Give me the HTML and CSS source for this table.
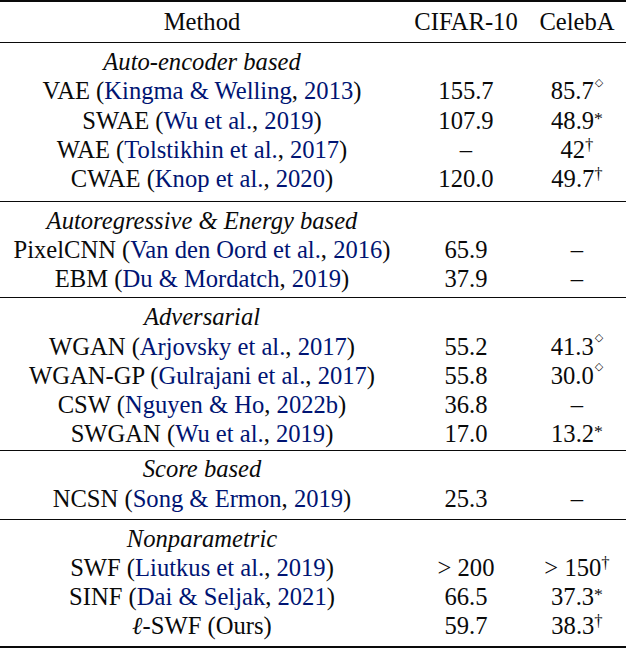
FILE: index.html
```html
<!DOCTYPE html>
<html>
<head>
<meta charset="utf-8">
<link rel="stylesheet" href="styles.css">
</head>
<body>
<div class="table">
  <div class="group head">
    <div class="row"><span>Method</span><span>CIFAR-10</span><span>CelebA</span></div>
  </div>
  <div class="group g-ae">
    <div class="row"><span class="cat">Auto-encoder based</span><span></span><span></span></div>
    <div class="row"><span>VAE (<a>Kingma &amp; Welling</a>, <a>2013</a>)</span><span>155.7</span><span>85.7<sup class="dia">◇</sup></span></div>
    <div class="row"><span>SWAE (<a>Wu et al.</a>, <a>2019</a>)</span><span>107.9</span><span>48.9<sup class="ast">*</sup></span></div>
    <div class="row"><span>WAE (<a>Tolstikhin et al.</a>, <a>2017</a>)</span><span>–</span><span>42<sup>†</sup></span></div>
    <div class="row"><span>CWAE (<a>Knop et al.</a>, <a>2020</a>)</span><span>120.0</span><span>49.7<sup>†</sup></span></div>
  </div>
  <div class="group g-ar">
    <div class="row"><span class="cat">Autoregressive &amp; Energy based</span><span></span><span></span></div>
    <div class="row"><span>PixelCNN (<a>Van den Oord et al.</a>, <a>2016</a>)</span><span>65.9</span><span>–</span></div>
    <div class="row"><span>EBM (<a>Du &amp; Mordatch</a>, <a>2019</a>)</span><span>37.9</span><span>–</span></div>
  </div>
  <div class="group g-adv">
    <div class="row"><span class="cat">Adversarial</span><span></span><span></span></div>
    <div class="row"><span>WGAN (<a>Arjovsky et al.</a>, <a>2017</a>)</span><span>55.2</span><span>41.3<sup class="dia">◇</sup></span></div>
    <div class="row"><span>WGAN-GP (<a>Gulrajani et al.</a>, <a>2017</a>)</span><span>55.8</span><span>30.0<sup class="dia">◇</sup></span></div>
    <div class="row"><span>CSW (<a>Nguyen &amp; Ho</a>, <a>2022b</a>)</span><span>36.8</span><span>–</span></div>
    <div class="row"><span>SWGAN (<a>Wu et al.</a>, <a>2019</a>)</span><span>17.0</span><span>13.2<sup class="ast">*</sup></span></div>
  </div>
  <div class="group g-score">
    <div class="row"><span class="cat">Score based</span><span></span><span></span></div>
    <div class="row"><span>NCSN (<a>Song &amp; Ermon</a>, <a>2019</a>)</span><span>25.3</span><span>–</span></div>
  </div>
  <div class="group g-np">
    <div class="row"><span class="cat">Nonparametric</span><span></span><span></span></div>
    <div class="row"><span>SWF (<a>Liutkus et al.</a>, <a>2019</a>)</span><span>&gt; 200</span><span>&gt; 150<sup>†</sup></span></div>
    <div class="row"><span>SINF (<a>Dai &amp; Seljak</a>, <a>2021</a>)</span><span>66.5</span><span>37.3<sup class="ast">*</sup></span></div>
    <div class="row"><span><i class="ell">ℓ</i>-SWF (Ours)</span><span>59.7</span><span>38.3<sup>†</sup></span></div>
  </div>
</div>
</body>
</html>
```

FILE: styles.css
```css
html, body {
  margin: 0;
  padding: 0;
  background: #ffffff;
}

body {
  font-family: "Liberation Serif", "Times New Roman", serif;
  font-size: 24.6px;
  color: #0a0a0a;
}

.table {
  width: 626px;
  border-top: 2px solid #0a0a0a;
  border-bottom: 2px solid #0a0a0a;
}

.group {
  padding: 4px 0 5px;
  border-top: 1.3px solid #0a0a0a;
}

.group.head {
  border-top: none;
  padding: 5px 0 6px;
}

.group.g-ae {
  padding: 4px 0 7.5px;
}

.group.g-ar {
  padding: 4px 0 4.2px;
}

.group.g-adv {
  padding: 4px 0 2px;
}

.group.g-score {
  padding: 3px 0 6px;
}

.group.g-np {
  padding: 4px 0 5.8px;
}

.row {
  display: grid;
  grid-template-columns: 404px 124px 98px;
  height: 29.2px;
  line-height: 29.2px;
  text-align: center;
  white-space: nowrap;
}

.cat {
  font-style: italic;
}

a {
  color: rgb(0, 20, 115);
  text-decoration: none;
}

sup {
  font-size: 0.68em;
  line-height: 0;
  vertical-align: 0.5em;
}

sup.dia {
  font-family: "DejaVu Sans", sans-serif;
  font-size: 0.45em;
  vertical-align: 1.25em;
  margin-left: 1px;
}

sup.ast {
  font-size: 0.72em;
  vertical-align: 0.3em;
}

.ell {
  font-style: italic;
}
```
